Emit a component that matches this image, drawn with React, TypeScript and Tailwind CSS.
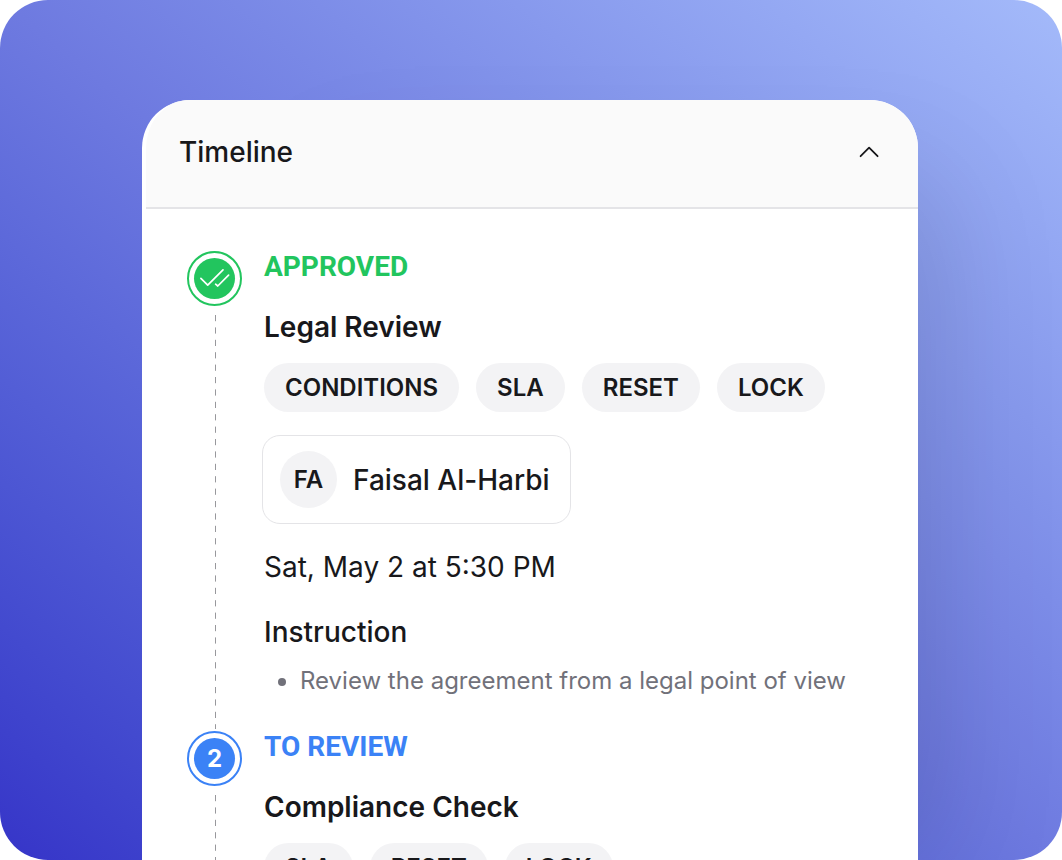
import { useState } from "react";
import type { ReactNode } from "react";

function DoubleCheck() {
  return (
    <svg
      viewBox="0 0 41 41"
      className="size-full"
      fill="none"
      stroke="white"
      strokeWidth="1.7"
      strokeLinecap="round"
      strokeLinejoin="round"
      aria-hidden="true"
    >
      <path d="M6.9 20.4 13.7 27.2 29 11.9" />
      <path d="M21.6 26.2 23.8 28 34.6 17.2" />
    </svg>
  );
}

type StepProps = {
  status: string;
  title: string;
  tags: string[];
  badge: ReactNode;
  ring: string;
  fill: string;
  text: string;
  children?: ReactNode;
};

function Step({ status, title, tags, badge, ring, fill, text, children }: StepProps) {
  return (
    <li className="flex gap-[22px]">
      {/* Badge and dashed rail */}
      <div className="flex w-[55px] shrink-0 flex-col items-center">
        <div className={`size-[55px] shrink-0 rounded-full border-2 p-[5px] ${ring}`}>
          <div
            className={`flex size-full items-center justify-center rounded-full text-2xl font-bold text-white ${fill}`}
          >
            {badge}
          </div>
        </div>
        <svg className="mt-[9px] mb-0.5 ml-px h-0 w-px flex-1" aria-hidden="true">
          <line x1="0.5" y1="0" x2="0.5" y2="100%" stroke="#98989c" strokeDasharray="6.2 6.2" />
        </svg>
      </div>

      <div className="min-w-0 flex-1 pb-[34px]">
        <p className={`font-[Roboto,sans-serif] text-[28px] leading-8 font-bold ${text}`}>{status}</p>
        <h3 className="mt-6 text-[28px] leading-10 font-semibold">{title}</h3>
        <ul className="mt-4 flex flex-wrap gap-[17px]">
          {tags.map((tag) => (
            <li
              key={tag}
              className="flex h-[49px] items-center rounded-full bg-[#f3f3f5] px-[21px] text-2xl font-semibold"
            >
              {tag}
            </li>
          ))}
        </ul>
        {children}
      </div>
    </li>
  );
}

function App() {
  const [open, setOpen] = useState(true);

  return (
    <div className="h-screen overflow-hidden rounded-[48px] bg-linear-to-tr from-[#3634c8] via-[#6e7ae0] to-[#a4bafa] pt-[100px] pr-36 pl-[142px] font-[Inter,sans-serif] text-[#18181b]">
      <main className="min-h-full overflow-hidden rounded-t-[48px] border-l-4 border-white bg-white shadow-[100px_0px_120px_-80px_rgba(0,0,0,0.12)]">
        {/* Header */}
        <header className="flex h-[109px] items-center justify-between border-b-2 border-[#e4e4e7] bg-[#fafafa] pr-[38px] pb-[3px] pl-[33px]">
          <h2 className="text-[28px] leading-10 font-medium">Timeline</h2>
          <button
            type="button"
            aria-label="Toggle timeline"
            aria-expanded={open}
            onClick={() => setOpen(!open)}
          >
            <svg
              width="21"
              height="12"
              viewBox="0 0 21 12"
              fill="none"
              stroke="currentColor"
              strokeWidth="1.8"
              strokeLinecap="round"
              strokeLinejoin="round"
              className={open ? "" : "rotate-180"}
              aria-hidden="true"
            >
              <path d="M1.6 10.2 10.1 1.7 18.6 10.2" />
            </svg>
          </button>
        </header>

        {/* Steps */}
        {open && (
          <ol className="pt-[42px] pr-6 pl-[41px]">
            <Step
              status="APPROVED"
              title="Legal Review"
              tags={["CONDITIONS", "SLA", "RESET", "LOCK"]}
              badge={<DoubleCheck />}
              ring="border-[#22c55e]"
              fill="bg-[#22c55e]"
              text="text-[#22c55e]"
            >
              <div className="mt-[23px] -ml-0.5 flex h-[89px] w-fit items-center gap-4 rounded-[18px] border border-[#e4e4e7] pr-5 pl-[17px]">
                <span className="flex size-[57px] items-center justify-center rounded-full bg-[#f3f3f5] text-2xl font-semibold">
                  FA
                </span>
                <span className="text-[28px] font-medium">Faisal Al-Harbi</span>
              </div>
              <p className="mt-[23px] text-[28px] leading-10">Sat, May 2 at 5:30 PM</p>
              <h4 className="mt-[25px] text-[28px] leading-10 font-medium">Instruction</h4>
              <ul className="mt-[13px] list-disc pl-9 text-2xl leading-8 text-[#71717a]">
                <li>Review the agreement from a legal point of view</li>
              </ul>
            </Step>
            <Step
              status="TO REVIEW"
              title="Compliance Check"
              tags={["SLA", "RESET", "LOCK"]}
              badge="2"
              ring="border-[#3b82f6]"
              fill="bg-[#3b82f6]"
              text="text-[#3b82f6]"
            />
          </ol>
        )}
      </main>
    </div>
  );
}

export default App;
